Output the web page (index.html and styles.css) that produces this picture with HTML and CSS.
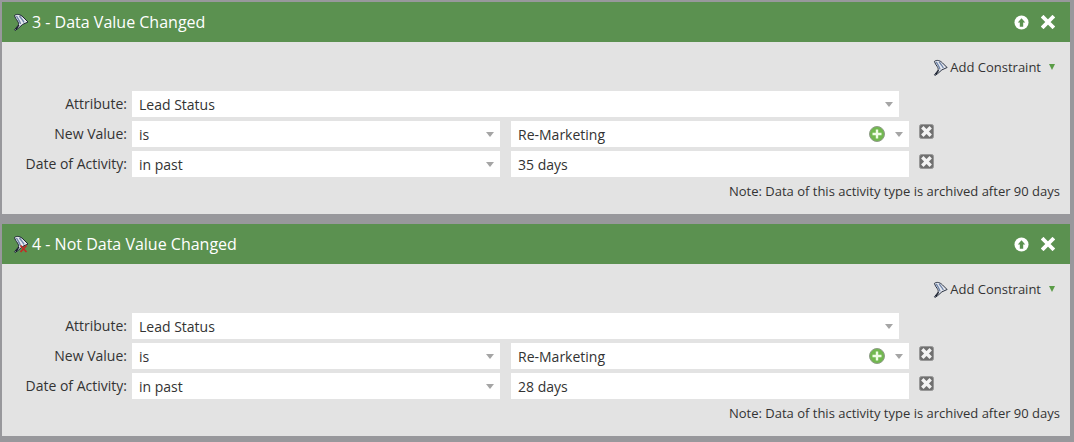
FILE: index.html
```html
<!DOCTYPE html>
<html lang="en">
<head>
<meta charset="utf-8">
<title>Smart list filters</title>
<link rel="stylesheet" href="styles.css">
</head>
<body>
<svg class="defs" width="0" height="0" aria-hidden="true">
  <defs>
    <symbol id="funnel" viewBox="0 0 16 18">
      <path d="M1.500 2.500C4 .5 7.500 1.500 10 4l5 5-5.500 2.500L5 15.500 2 17.500l-.5-.7L5 12.500c1-1.500.5-3-.5-4.500C3.300 6.300 2 4.500 1.500 2.500Z" fill="#e6e9ef" stroke="#1d2536" stroke-width="1"/>
      <path d="M3.500 3C5 6 7 8.500 7.500 11M6.500 2.800C8 5.500 10 7 11 9.500" fill="none" stroke="#6e83a8" stroke-width="1.400"/>
      <path d="M3 16.500 6 12" stroke="#0f1420" stroke-width="1.200"/>
    </symbol>
    <symbol id="del" viewBox="0 0 15 15">
      <rect x=".5" y=".5" width="14" height="14" rx="2" fill="#707070" stroke="#989898"/>
      <path d="M4.500 4.500l6 6M10.500 4.500l-6 6" stroke="#f4f4f4" stroke-width="3.400" stroke-linecap="square"/>
    </symbol>
    <symbol id="plus" viewBox="0 0 16 16">
      <circle cx="8" cy="8" r="7.500" fill="#72b850" stroke="#8f9c88"/>
      <path d="M8 3.500v9M3.500 8h9" stroke="#effce6" stroke-width="2.400"/>
    </symbol>
    <symbol id="up" viewBox="0 0 16 16">
      <circle cx="8" cy="8" r="7.500" fill="#fff"/>
      <path d="M8 3.500 12 8H9.800v4.500H6.200V8H4Z" fill="#5b9150"/>
    </symbol>
    <symbol id="close" viewBox="0 0 14 14">
      <path d="M2.500 2.500l9 9M11.500 2.500l-9 9" stroke="#fff" stroke-width="3.800" stroke-linecap="square"/>
    </symbol>
  </defs>
</svg>

<section class="panel">
  <header class="head">
    <svg class="head-icon"><use href="#funnel"/></svg>
    <h2 class="title">3 - Data Value Changed</h2>
    <svg class="act"><use href="#up"/></svg>
    <svg class="close"><use href="#close"/></svg>
  </header>
  <div class="content">
    <div class="tools">
      <svg class="tool-icon"><use href="#funnel"/></svg>
      <span class="tool-label">Add Constraint</span>
      <span class="tool-arrow"></span>
    </div>
    <div class="form">
      <label class="lbl">Attribute:</label>
      <div class="field span-attr"><span>Lead Status</span><i class="caret"></i></div>

      <label class="lbl">New Value:</label>
      <div class="field"><span>is</span><i class="caret"></i></div>
      <div class="field wide"><span>Re-Marketing</span><svg class="plus"><use href="#plus"/></svg><i class="caret"></i></div>
      <svg class="del"><use href="#del"/></svg>

      <label class="lbl">Date of Activity:</label>
      <div class="field"><span>in past</span><i class="caret"></i></div>
      <div class="field wide"><span>35 days</span></div>
      <svg class="del"><use href="#del"/></svg>
    </div>
    <p class="note">Note: Data of this activity type is archived after 90 days</p>
  </div>
</section>

<section class="panel">
  <header class="head">
    <svg class="head-icon" viewBox="0 0 16 18"><use href="#funnel"/><path d="M7.500 10.500l6 6.500M13.500 10.500l-6 6.500" stroke="#c32c26" stroke-width="1.800"/></svg>
    <h2 class="title">4 - Not Data Value Changed</h2>
    <svg class="act"><use href="#up"/></svg>
    <svg class="close"><use href="#close"/></svg>
  </header>
  <div class="content">
    <div class="tools">
      <svg class="tool-icon"><use href="#funnel"/></svg>
      <span class="tool-label">Add Constraint</span>
      <span class="tool-arrow"></span>
    </div>
    <div class="form">
      <label class="lbl">Attribute:</label>
      <div class="field span-attr"><span>Lead Status</span><i class="caret"></i></div>

      <label class="lbl">New Value:</label>
      <div class="field"><span>is</span><i class="caret"></i></div>
      <div class="field wide"><span>Re-Marketing</span><svg class="plus"><use href="#plus"/></svg><i class="caret"></i></div>
      <svg class="del"><use href="#del"/></svg>

      <label class="lbl">Date of Activity:</label>
      <div class="field"><span>in past</span><i class="caret"></i></div>
      <div class="field wide"><span>28 days</span></div>
      <svg class="del"><use href="#del"/></svg>
    </div>
    <p class="note">Note: Data of this activity type is archived after 90 days</p>
  </div>
</section>
</body>
</html>
```

FILE: styles.css
```css
* { box-sizing: border-box; }
html, body { height: 100%; }
body {
  margin: 0;
  padding: 2px 4px 0 2px;
  background: #98989c;
  font-family: "Open Sans", sans-serif;
  font-size: 14px;
  color: #333;
  overflow: hidden;
}
.defs { position: absolute; }
.panel { margin-bottom: 10px; }
.head {
  height: 40px;
  background: #5b9150;
  display: flex;
  align-items: center;
  padding: 0 15px 0 11px;
  color: #fff;
}
.head-icon { width: 16px; height: 18px; margin-right: 3px; flex: none; }
.title {
  margin: 0 auto 0 0;
  font-size: 16px;
  font-weight: 400;
  line-height: 22px;
}
.act { width: 15px; height: 15px; flex: none; }
.close { width: 14px; height: 14px; flex: none; margin-left: 12px; }
.content {
  height: 172px;
  background: #e3e3e3;
  padding-top: 16px;
}
.tools {
  display: flex;
  align-items: center;
  justify-content: flex-end;
  height: 18px;
  padding-right: 15px;
  font-size: 13px;
}
.tool-icon { width: 15px; height: 17px; margin-right: 2px; }
.tool-label { line-height: 18px; }
.tool-arrow {
  width: 0;
  height: 0;
  margin-left: 8px;
  border-left: 3.500px solid transparent;
  border-right: 3.500px solid transparent;
  border-top: 6px solid #5a9c46;
}
.form {
  display: grid;
  grid-template-columns: 125px 373px 409px 30px;
  grid-auto-rows: 26px;
  row-gap: 4px;
  margin-top: 15px;
}
.lbl {
  grid-column: 1;
  text-align: right;
  line-height: 26px;
  white-space: nowrap;
}
.field {
  grid-column: 2;
  margin-left: 5px;
  background: #fff;
  display: flex;
  align-items: center;
  padding: 0 6px 0 7px;
  line-height: 24px;
  color: #333;
}
.field span { margin-right: auto; padding-top: 2px; }
.span-attr { grid-column: 2 / span 2; width: 767px; }
.wide { grid-column: 3; margin-left: 11px; width: 398px; }
.caret {
  width: 0;
  height: 0;
  border-left: 4px solid transparent;
  border-right: 4px solid transparent;
  border-top: 5px solid #a5a5a5;
}
.plus { width: 16px; height: 16px; margin-right: 10px; }
.del { grid-column: 4; width: 15px; height: 15px; margin: 3px 0 0 10px; }
.note {
  margin: 5px 0 0;
  padding-right: 10px;
  text-align: right;
  font-size: 13px;
  line-height: 18px;
}
```
